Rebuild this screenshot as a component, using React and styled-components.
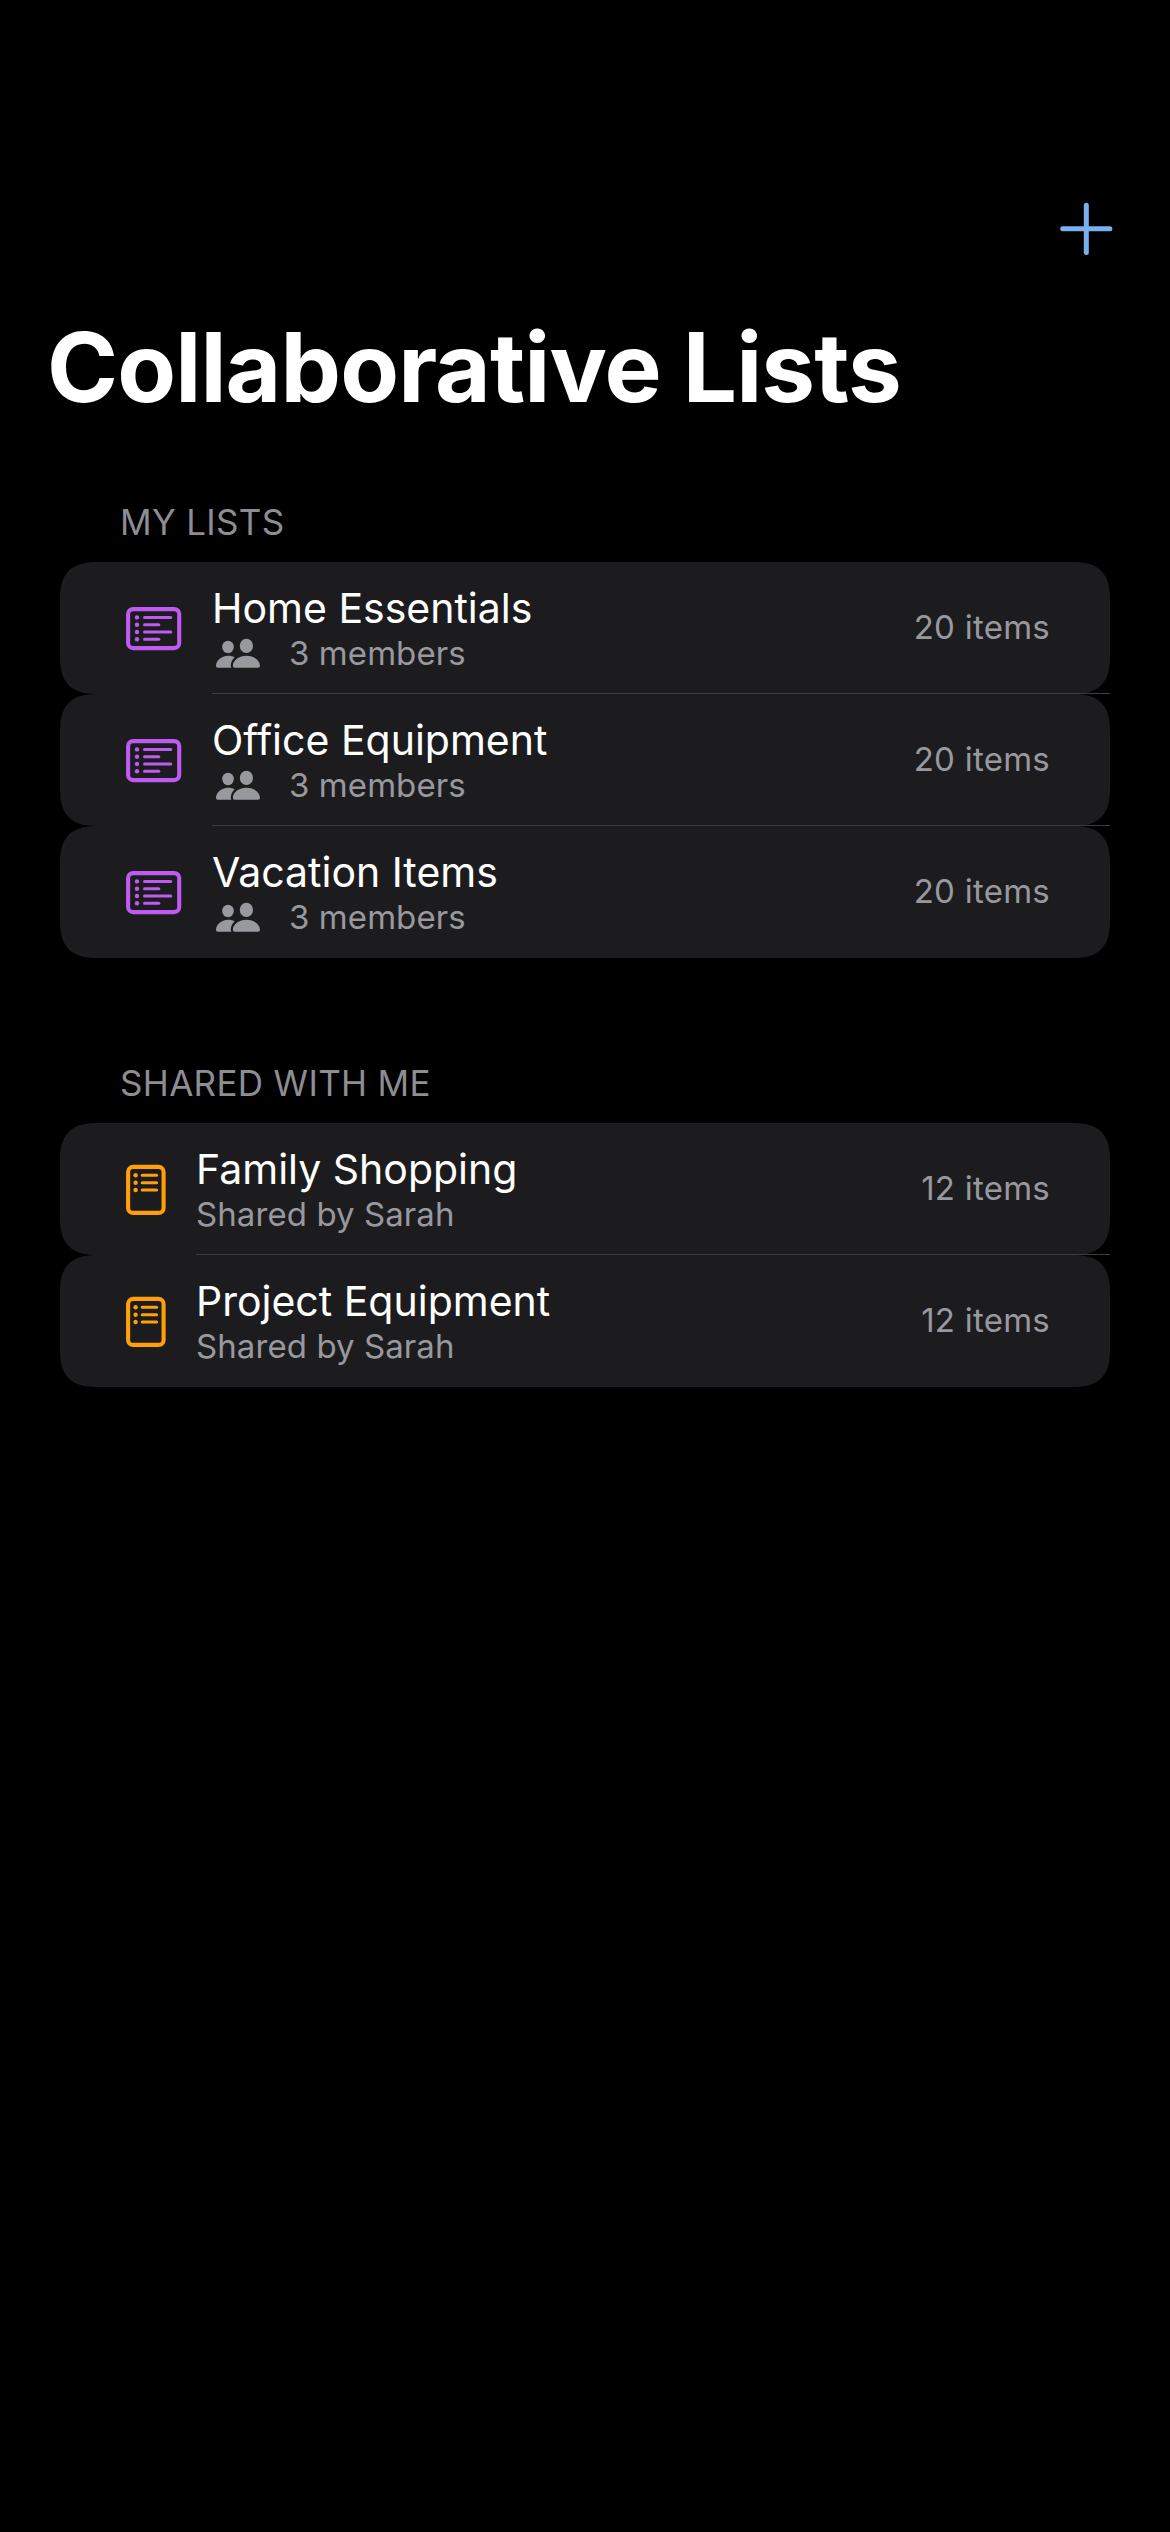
import React from "react";
import styled, { createGlobalStyle } from "styled-components";

const GlobalStyle = createGlobalStyle`
  body {
    margin: 0;
    background: #000;
    color: #fff;
    font-family: Inter, "Liberation Sans", sans-serif;
  }
`;

const Screen = styled.main`
  box-sizing: border-box;
  min-height: 2532px;
  padding-top: 163px;
  background: #000;
  display: flex;
  flex-direction: column;
`;

const NavBar = styled.nav`
  height: 132px;
  padding-right: 57px;
  display: flex;
  align-items: center;
  justify-content: flex-end;
`;

const AddButton = styled.button`
  display: flex;
  padding: 0;
  border: 0;
  background: none;
  color: #78b0f0;
`;

const Title = styled.h1`
  margin: 12px 47px 71px;
  font-size: 96px;
  line-height: 120px;
  font-weight: 700;
  letter-spacing: -0.84px;
`;

const Section = styled.section`
  padding: 0 60px;

  & + & {
    margin-top: 101px;
  }
`;

const SectionHeader = styled.h2`
  margin: 0 60px 16px;
  font-size: 35px;
  line-height: 48px;
  font-weight: 400;
  letter-spacing: 0.33px;
  color: #8d8d93;
  text-transform: uppercase;
`;

const Rows = styled.ul`
  margin: 0;
  padding: 0;
  list-style: none;
`;

const Row = styled.li`
  position: relative;
  box-sizing: border-box;
  height: 132px;
  padding: 0 60px 0 66px;
  display: flex;
  align-items: center;
  gap: 30px;
  background: #1c1c1e;
  border-radius: 30px;

  @supports (corner-shape: superellipse(1.4)) {
    border-radius: 38px;
    corner-shape: superellipse(1.4);
  }

  &:not(:last-child)::after {
    content: "";
    position: absolute;
    left: ${(p) => p.$inset}px;
    right: 0;
    bottom: 0;
    height: 1px;
    background: #3d3d41;
  }
`;

const RowIcon = styled.svg`
  flex: none;
  display: block;
`;

const RowText = styled.div`
  flex: 1;
  display: flex;
  flex-direction: column;
  gap: 1px;
`;

const RowTitle = styled.div`
  font-size: 41px;
  line-height: 48px;
  white-space: nowrap;
`;

const RowSubtitle = styled.div`
  display: flex;
  align-items: center;
  gap: 29px;
  padding-left: ${(p) => (p.$withIcon ? 4 : 0)}px;
  font-size: 33px;
  line-height: 40px;
  letter-spacing: 0.08px;
  color: #98989f;
  white-space: nowrap;
`;

const Count = styled.div`
  padding-bottom: 2px;
  font-size: 33px;
  line-height: 40px;
  letter-spacing: 0.25px;
  color: #98989f;
  white-space: nowrap;
`;

const PlusIcon = () => (
  <svg width="54" height="54" viewBox="0 0 54 54" fill="none" stroke="currentColor" strokeWidth="5" strokeLinecap="round">
    <path d="M27.3 3.2v47.2M3.7 26.8h47.2" />
  </svg>
);

const WideListIcon = () => (
  <RowIcon width="56" height="46" viewBox="0 0 56 46" fill="none" stroke="#bf5af2" strokeLinecap="round">
    <rect x="2.1" y="4.1" width="51.1" height="39" rx="5" strokeWidth="4.1" />
    {[12.4, 19.7, 27, 34.3].map((y, i) => (
      <React.Fragment key={y}>
        <circle cx="11" cy={y} r="2.2" fill="#bf5af2" stroke="none" />
        <path d={`M18.5 ${y}H${i % 2 ? 32.8 : 44.8}`} strokeWidth="3" />
      </React.Fragment>
    ))}
  </RowIcon>
);

const TallListIcon = () => (
  <RowIcon width="40" height="54" viewBox="0 0 40 54" fill="none" stroke="#ff9f0a" strokeLinecap="round">
    <rect x="2.1" y="4.9" width="35.5" height="46" rx="5" strokeWidth="4.1" />
    {[13.3, 20.7, 28].map((y) => (
      <React.Fragment key={y}>
        <circle cx="9.6" cy={y} r="2.2" fill="#ff9f0a" stroke="none" />
        <path d={`M16.2 ${y}H30.6`} strokeWidth="3" />
      </React.Fragment>
    ))}
  </RowIcon>
);

const PeopleIcon = () => (
  <svg width="44" height="30" viewBox="0 0 44 30" fill="currentColor">
    <ellipse cx="12" cy="9" rx="5.8" ry="6.2" />
    <ellipse cx="30.4" cy="7.9" rx="6.6" ry="7.2" />
    <path d="M1.8 29.8Q0 29.8 0 28C0 23 5 17.8 12 17.8C14.5 17.8 17 18.4 18.6 19.2C16 21.5 14.8 25 14.8 27.5Q14.8 29 15.4 29.8Z" />
    <path d="M18.7 29.8Q16.8 29.8 16.8 28C16.8 23 22 17.8 30.4 17.8S44 23 44 28Q44 29.8 42.1 29.8Z" />
  </svg>
);

const myLists = [
  { name: "Home Essentials", members: 3, items: 20 },
  { name: "Office Equipment", members: 3, items: 20 },
  { name: "Vacation Items", members: 3, items: 20 },
];

const sharedLists = [
  { name: "Family Shopping", owner: "Sarah", items: 12 },
  { name: "Project Equipment", owner: "Sarah", items: 12 },
];

export default function App() {
  return (
    <>
      <GlobalStyle />
      <Screen>
        <NavBar>
          <AddButton aria-label="Add list">
            <PlusIcon />
          </AddButton>
        </NavBar>
        <Title>Collaborative Lists</Title>
        <Section>
          <SectionHeader>My Lists</SectionHeader>
          <Rows>
            {myLists.map((list) => (
              <Row key={list.name} $inset={152}>
                <WideListIcon />
                <RowText>
                  <RowTitle>{list.name}</RowTitle>
                  <RowSubtitle $withIcon>
                    <PeopleIcon />
                    {`${list.members} members`}
                  </RowSubtitle>
                </RowText>
                <Count>{`${list.items} items`}</Count>
              </Row>
            ))}
          </Rows>
        </Section>
        <Section>
          <SectionHeader>Shared With Me</SectionHeader>
          <Rows>
            {sharedLists.map((list) => (
              <Row key={list.name} $inset={136}>
                <TallListIcon />
                <RowText>
                  <RowTitle>{list.name}</RowTitle>
                  <RowSubtitle>{`Shared by ${list.owner}`}</RowSubtitle>
                </RowText>
                <Count>{`${list.items} items`}</Count>
              </Row>
            ))}
          </Rows>
        </Section>
      </Screen>
    </>
  );
}
